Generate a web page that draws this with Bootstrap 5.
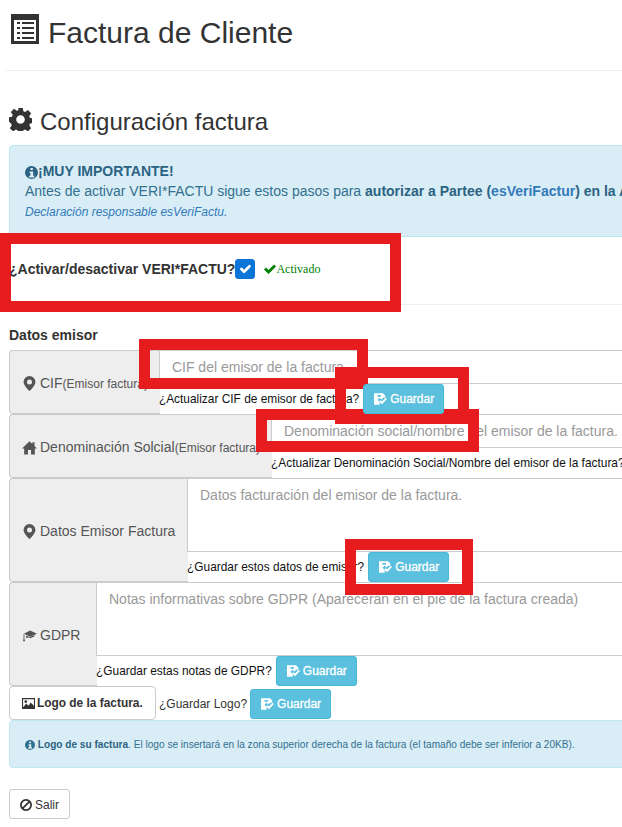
<!DOCTYPE html>
<html lang="es">
<head>
    <meta charset="UTF-8">
    <meta name="viewport" content="width=device-width, initial-scale=1.0">
    <title>Factura de Cliente</title>
    <link href="https://cdn.jsdelivr.net/npm/bootstrap@5.3.0/dist/css/bootstrap.min.css" rel="stylesheet">
    <style>
        html, body { overflow: hidden; background: #fff; }
        body { font-family: "Liberation Sans", Arial, sans-serif; font-size: 14px; line-height: 20px; color: #333; }
        svg.ico { fill: currentColor; display: inline-block; flex: none; }

        .sheet { position: relative; width: 820px; padding-left: 9px; }
        .top-title { height: 70px; display: flex; align-items: center; gap: 9px; padding: 0 0 4px 2px; }
        .top-title svg { margin-bottom: 8px; }
        .top-title h1 { font-size: 30px; line-height: 36px; font-weight: 400; margin: 0; color: #333; }
        .top-rule { border-top: 1px solid #eee; margin: 0 0 0 -4px; height: 0; }
        .conf-title { display: flex; align-items: center; gap: 8px; height: 40px; margin: 31px 0 3px; }
        .conf-title svg { margin-bottom: 6px; }
        .conf-title h3 { font-size: 24px; line-height: 28px; font-weight: 400; margin: 0; color: #333; }

        .note-box { background: #d9edf7; border: 1px solid #bce8f1; border-radius: 4px; color: #31708f; padding: 15px; margin: 0; }
        .note-box strong { color: #2b6382; }
        .note-box a { color: #337ab7; text-decoration: none; }
        .note-line-small { font-size: 12px; height: 20px; padding-top: 1px; }
        .note-small { font-size: 10.1px; padding: 14px 15px 12px; }

        .switch-row { height: 67px; padding-bottom: 4px; display: flex; align-items: center; }
        .switch-row label { font-weight: 700; }
        .switch-row .form-check-input { width: 20px; height: 20px; margin: 0; border-radius: 3px; background-color: #0b76d8; border-color: #0b76d8; }
        .state-on { font-family: "Liberation Serif", serif; font-size: 12px; color: green; margin-left: 9px; display: flex; align-items: center; }
        .soft-rule { border-top: 1px solid #eee; height: 0; }
        .block-title { font-weight: 700; margin: 20px 0 5px; height: 20px; }

        .field-row { flex-wrap: nowrap; width: 100%; }
        .field-row > .input-group-text { background: #eee; border: 1px solid #ccc; border-right: 0; color: #555; font-size: 14px; padding: 7px 12px 5px; border-radius: 4px 0 0 4px; gap: 3px; }
        .field-row > .input-group-text small { font-size: 12px; }
        .label-datos { min-width: 179px; }
        .label-gdpr { min-width: 88px; }
        .field-main { flex: 1 1 auto; min-width: 0; }
        .field-main .form-control { height: 34px; border: 1px solid #ccc; border-radius: 0; font-size: 14px; line-height: 20px; padding: 6px 12px; color: #555; box-shadow: none; }
        .field-main textarea.form-control { height: 74px; resize: none; }
        .field-main .form-control::placeholder { color: #999; opacity: 1; }
        .save-line { height: 30px; display: flex; align-items: center; gap: 4px; font-size: 11.9px; color: #111; white-space: nowrap; }

        .btn-save { background: #5bc0de; border: 1px solid #46b8da; color: #fff; font-size: 12px; line-height: 18px; font-weight: 400; -webkit-text-stroke: .3px #fff; padding: 5px 10px; border-radius: 3px; height: 30px; width: 81px; display: inline-flex; align-items: center; gap: 3px; white-space: nowrap; }
        .btn-save:hover { background: #46b8da; color: #fff; }
        .logo-row { height: 34px; display: flex; align-items: flex-end; gap: 3px; font-size: 12px; color: #333; }
        .btn-logo { height: 34px; width: 147px; background: #fff; border: 1px solid #ccc; border-radius: 4px; font-size: 11.9px; font-weight: 700; color: #333; padding: 1px 12px 0; display: inline-flex; align-items: center; gap: 2px; white-space: nowrap; }
        .logo-ask { height: 30px; display: flex; align-items: center; margin-bottom: 1px; gap: 3px; }
        .btn-exit { height: 30px; width: 61px; margin-top: 21px; background: #fff; border: 1px solid #ccc; border-radius: 3px; font-size: 12px; color: #333; padding: 1px 10px 0; display: inline-flex; align-items: center; gap: 3px; }

        .red-mark { position: absolute; border: 11px solid #e71c1f; pointer-events: none; }
    </style>
</head>
<body>
    <svg width="0" height="0" class="position-absolute">
        <symbol id="i-list" viewBox="0 0 28 30"><path fill-rule="evenodd" d="M0 0h28v30H0zM3 6v21h22V6z"/><path d="M6 8h3v2H6zM11 8h12v2H11zM6 13h3v2H6zM11 13h12v2H11zM6 18h3v2H6zM11 18h12v2H11zM6 23h3v2H6zM11 23h12v2H11z"/></symbol>
        <symbol id="i-gear" viewBox="0 0 24 24"><path fill-rule="evenodd" d="M9.600 0h4.800l.6 3.400 1.800.8 2.900-2 3.400 3.400-2 2.900.8 1.800 3.100.6v4.800l-3.100.6-.8 1.800 2 2.900-3.400 3.400-2.900-2-1.800.8-.6 3.100H9.600l-.6-3.100-1.800-.8-2.900 2-3.400-3.400 2-2.900-.8-1.800L0 14.400V9.600l3.100-.6.800-1.800-2-2.900 3.400-3.400 2.900 2 1.800-.8zM12 7.500a4.500 4.500 0 1 0 0 9a4.500 4.500 0 1 0 0-9z"/></symbol>
        <symbol id="i-info" viewBox="0 0 24 24"><path fill-rule="evenodd" d="M12 0a12 12 0 1 0 0 24a12 12 0 1 0 0-24zM10 3.500h4.500v4H10zM8.500 10h6.500v8h2v3H7.500v-3h2.500v-5H8.500z"/></symbol>
        <symbol id="i-pin" viewBox="0 0 24 24"><path fill-rule="evenodd" d="M12 0a9.500 9.500 0 0 0-9.500 9.500C2.500 15.500 12 24 12 24s9.500-8.500 9.500-14.500A9.500 9.500 0 0 0 12 0zM12 5.500a4 4 0 1 1 0 8a4 4 0 1 1 0-8z"/></symbol>
        <symbol id="i-home" viewBox="0 0 24 24"><path d="M12 2 0 13.500h3.500V23h6v-7h5v7h6v-9.500H24L20 9.700V3.500h-3.500v3z"/></symbol>
        <symbol id="i-cap" viewBox="0 0 24 24"><path d="M13 4 3 9l10 5 11-5z"/><path d="M6.500 12.500v3.500c2-1.500 6-1 7.500.5 1.500-1.500 3.500-2.500 6-3v-2.500l-7 3.300zM2.500 10h1.300v7l1.200 4H1.500l1-4z"/></symbol>
        <symbol id="i-pic" viewBox="0 0 24 20"><path fill-rule="evenodd" d="M0 0h24v20H0zM2 2v16h20V2z"/><path d="M2 17l6-7 4 4 4-6 6 6v9H2z"/><circle cx="7" cy="6.500" r="2.500"/></symbol>
        <symbol id="i-save" viewBox="0 0 15 13"><path fill-rule="evenodd" d="M0 0h10.500L13 2.500V5h-2.500L8.500 7l-2-2-2.500 2.500L6.500 10v3H0zM4 2h4v2H4z"/><path d="M15 6.500 9.200 12.500 6 9.300l1.500-1.500 1.700 1.700 4.300-4.500z"/></symbol>
        <symbol id="i-ban" viewBox="0 0 24 24"><path fill-rule="evenodd" d="M12 0a12 12 0 1 0 0 24a12 12 0 1 0 0-24zM12 3.500c1.700 0 3.300.5 4.600 1.400L4.900 16.600A8.500 8.500 0 0 1 12 3.500zM19.100 7.400A8.500 8.500 0 0 1 7.400 19.100z"/></symbol>
        <symbol id="i-ok" viewBox="0 0 24 20"><path d="M0 11 4 7l5 5L20 1l4 4L9 20z"/></symbol>
    </svg>

    <div class="sheet">
        <div class="top-title">
            <svg class="ico" width="28" height="30"><use href="#i-list"/></svg>
            <h1>Factura de Cliente</h1>
        </div>
        <div class="top-rule"></div>

        <div class="conf-title">
            <svg class="ico" width="23" height="23"><use href="#i-gear"/></svg>
            <h3>Configuración factura</h3>
        </div>

        <div class="note-box">
            <div><strong><svg class="ico" width="13" height="13"><use href="#i-info"/></svg>¡MUY IMPORTANTE!</strong></div>
            <div>Antes de activar VERI*FACTU sigue estos pasos para <strong>autorizar a Partee (<a href="#">esVeriFactur</a>) en la AEAT.</strong></div>
            <div class="note-line-small"><a href="#"><em>Declaración responsable esVeriFactu.</em></a></div>
        </div>

        <div class="switch-row">
            <label for="vf">¿Activar/desactivar VERI*FACTU?</label>
            <input class="form-check-input" type="checkbox" id="vf" checked>
            <span class="state-on"><svg class="ico" width="12" height="10"><use href="#i-ok"/></svg>Activado</span>
        </div>
        <div class="soft-rule"></div>

        <div class="block-title">Datos emisor</div>

        <div class="input-group field-row">
            <span class="input-group-text"><svg class="ico" width="15" height="15"><use href="#i-pin"/></svg><span>CIF<small>(Emisor factura)</small></span></span>
            <div class="field-main">
                <input type="text" class="form-control" placeholder="CIF del emisor de la factura">
                <div class="save-line">¿Actualizar CIF de emisor de factura? <button class="btn btn-save"><svg class="ico" width="13" height="12"><use href="#i-save"/></svg>Guardar</button></div>
            </div>
        </div>
        <div class="input-group field-row">
            <span class="input-group-text"><svg class="ico" width="15" height="15"><use href="#i-home"/></svg><span>Denominación Solcial<small>(Emisor factura)</small></span></span>
            <div class="field-main">
                <input type="text" class="form-control" placeholder="Denominación social/nombre del emisor de la factura.">
                <div class="save-line">¿Actualizar Denominación Social/Nombre del emisor de la factura? <button class="btn btn-save"><svg class="ico" width="13" height="12"><use href="#i-save"/></svg>Guardar</button></div>
            </div>
        </div>
        <div class="input-group field-row">
            <span class="input-group-text label-datos"><svg class="ico" width="15" height="15"><use href="#i-pin"/></svg>Datos Emisor Factura</span>
            <div class="field-main">
                <textarea class="form-control" placeholder="Datos facturación del emisor de la factura."></textarea>
                <div class="save-line">¿Guardar estos datos de emisor? <button class="btn btn-save"><svg class="ico" width="13" height="12"><use href="#i-save"/></svg>Guardar</button></div>
            </div>
        </div>
        <div class="input-group field-row">
            <span class="input-group-text label-gdpr"><svg class="ico" width="15" height="15"><use href="#i-cap"/></svg>GDPR</span>
            <div class="field-main">
                <textarea class="form-control" placeholder="Notas informativas sobre GDPR (Aparecerán en el pie de la factura creada)"></textarea>
                <div class="save-line">¿Guardar estas notas de GDPR? <button class="btn btn-save"><svg class="ico" width="13" height="12"><use href="#i-save"/></svg>Guardar</button></div>
            </div>
        </div>

        <div class="logo-row">
            <button class="btn btn-logo"><svg class="ico" width="13" height="11"><use href="#i-pic"/></svg>Logo de la factura.</button>
            <div class="logo-ask">¿Guardar Logo? <button class="btn btn-save"><svg class="ico" width="13" height="12"><use href="#i-save"/></svg>Guardar</button></div>
        </div>

        <div class="note-box note-small">
            <svg class="ico" width="10" height="10"><use href="#i-info"/></svg> <strong>Logo de su factura</strong>. El logo se insertará en la zona superior derecha de la factura (el tamaño debe ser inferior a 20KB).
        </div>

        <button class="btn btn-exit"><svg class="ico" width="12" height="12"><use href="#i-ban"/></svg>Salir</button>

        <div class="red-mark" style="left:0;top:233px;width:401px;height:79px"></div>
        <div class="red-mark" style="left:139px;top:339px;width:229px;height:50px"></div>
        <div class="red-mark" style="left:335px;top:367px;width:134px;height:57px"></div>
        <div class="red-mark" style="left:256px;top:409px;width:223px;height:43px"></div>
        <div class="red-mark" style="left:345px;top:539px;width:128px;height:56px"></div>
    </div>
</body>
</html>
